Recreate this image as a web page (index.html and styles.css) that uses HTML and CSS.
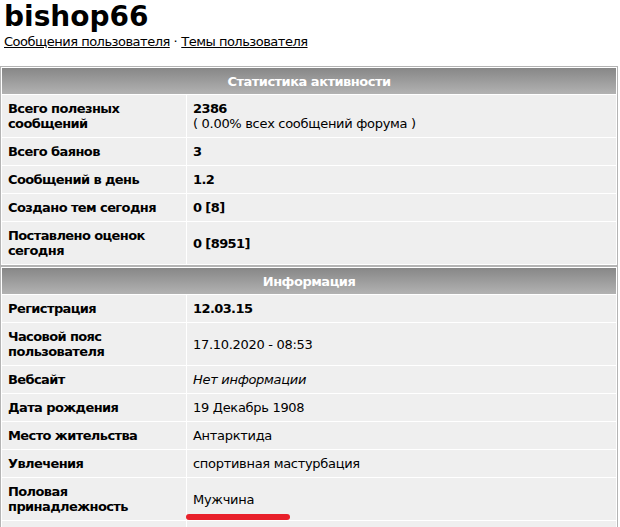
FILE: index.html
```html
<!DOCTYPE html>
<html lang="ru">

<head>
  <meta charset="UTF-8">
  <title>bishop66</title>
  <link rel="stylesheet" href="styles.css">
</head>

<body>

  <div class="profile-head">
    <h1>bishop66</h1>
    <a href="#">Сообщения пользователя</a> &middot; <a href="#">Темы пользователя</a>
  </div>

  <table class="info-table">
    <tr><th colspan="2">Статистика активности</th></tr>
    <tr><td class="label">Всего полезных сообщений</td><td class="value"><b>2386</b><br>( 0.00% всех сообщений форума )</td></tr>
    <tr><td class="label">Всего баянов</td><td class="value"><b>3</b></td></tr>
    <tr><td class="label">Сообщений в день</td><td class="value"><b>1.2</b></td></tr>
    <tr><td class="label">Создано тем сегодня</td><td class="value"><b>0 [8]</b></td></tr>
    <tr><td class="label">Поставлено оценок сегодня</td><td class="value"><b>0 [8951]</b></td></tr>
  </table>

  <table class="info-table">
    <tr><th colspan="2">Информация</th></tr>
    <tr><td class="label">Регистрация</td><td class="value"><b>12.03.15</b></td></tr>
    <tr><td class="label">Часовой пояс пользователя</td><td class="value">17.10.2020 - 08:53</td></tr>
    <tr><td class="label">Вебсайт</td><td class="value"><i>Нет информации</i></td></tr>
    <tr><td class="label">Дата рождения</td><td class="value">19 Декабрь 1908</td></tr>
    <tr><td class="label">Место жительства</td><td class="value">Антарктида</td></tr>
    <tr><td class="label">Увлечения</td><td class="value">спортивная мастурбация</td></tr>
    <tr><td class="label">Половая принадлежность</td><td class="value"><span class="marked">Мужчина</span></td></tr>
    <tr><td class="label">&nbsp;</td><td class="value">&nbsp;</td></tr>
  </table>

</body>

</html>
```

FILE: styles.css
```css
body {
  margin: 0;
  background-color: #fff;
  color: #000;
  font-family: Verdana, "DejaVu Sans", sans-serif;
  font-size: 13px;
  letter-spacing: -0.3px;
}

.profile-head {
  padding: 0 4px;
  height: 66px;
}

h1 {
  margin: 0;
  font-size: 28px;
  line-height: 34px;
  letter-spacing: 0;
}

.profile-head a {
  color: #000;
  letter-spacing: -0.5px;
}

.info-table {
  width: 618px;
  border: 1px solid #b4b4b4;
  border-spacing: 1px;
}

.info-table th {
  height: 26px;
  padding: 0;
  background: linear-gradient(#878787, #b2b2b2);
  color: #fff;
  font-size: 13px;
  letter-spacing: -0.5px;
}

.info-table td {
  background-color: #efefef;
  padding: 6px 6px;
  line-height: 15px;
}

.info-table b {
  letter-spacing: -0.6px;
}

.label {
  width: 172px;
  font-weight: bold;
  letter-spacing: -0.6px;
}

.marked {
  position: relative;
}

/* red underline mark */
.marked::after {
  content: "";
  position: absolute;
  left: -7px;
  top: 22px;
  width: 104px;
  height: 6px;
  border-radius: 3px;
  background-color: #e8202a;
}
```
